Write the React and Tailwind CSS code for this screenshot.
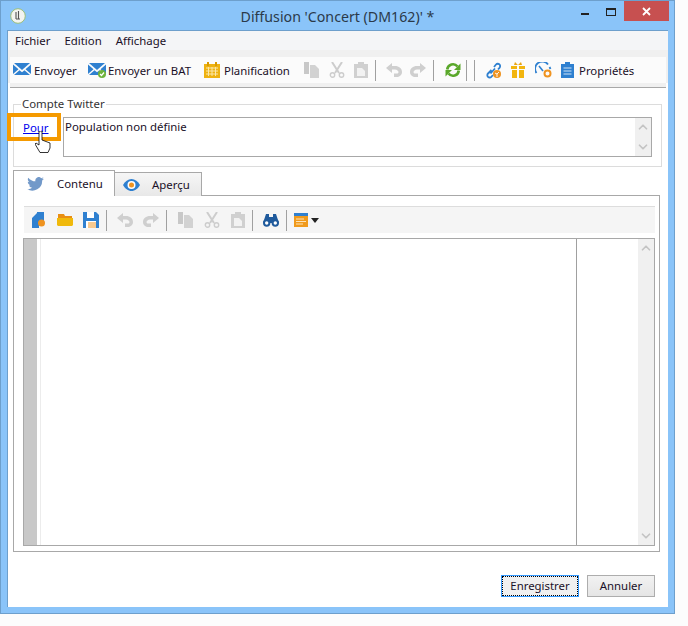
import { ChevronUp, ChevronDown } from "lucide-react";

// toolbar icons, all on a 16x16 grid
const Mail = ({ check }) => (
  <svg width="18" height="16" viewBox="0 0 18 16">
    <path d="M1 1h16l-8 7z" fill="#2f80d0" />
    <path d="M0 2.500l5.500 4.800L0 12zM18 2.500V12l-5.500-4.700zM1 13l5.500-4.700L9 10.300l2.500-2 5.500 4.700z" fill="#2f80d0" />
    {check && <circle cx="14" cy="12" r="4" fill="#6fb33a" />}
    {check && <path d="M12 12l1.500 1.500L16 10.500" stroke="#fff" strokeWidth="1.200" fill="none" />}
  </svg>
);

const Calendar = () => (
  <svg width="16" height="16" viewBox="0 0 16 16">
    <rect x="0" y="2" width="16" height="14" fill="#eeb211" />
    <rect x="3" y="0" width="2" height="4" fill="#d99a00" />
    <rect x="11" y="0" width="2" height="4" fill="#d99a00" />
    <path d="M2 6h12M2 9h12M2 12h12M4.500 5v9M8 5v9M11.500 5v9" stroke="#fbe7a8" strokeWidth="1" />
  </svg>
);

const Copy = () => (
  <svg width="16" height="16" viewBox="0 0 16 16">
    <path d="M0 0h5v12H0z" fill="#c8c8c8" />
    <path d="M6 3h5l4 4v9H6z" fill="#d2d2d2" />
  </svg>
);

const Cut = ({ color = "#cdcdcd" }) => (
  <svg width="16" height="16" viewBox="0 0 16 16" fill="none" stroke={color} strokeWidth="2">
    <path d="M3 0l7 11M13 0L6 11" />
    <circle cx="3.500" cy="13" r="2.200" strokeWidth="1.400" />
    <circle cx="12.500" cy="13" r="2.200" strokeWidth="1.400" />
  </svg>
);

const Paste = () => (
  <svg width="14" height="16" viewBox="0 0 14 16">
    <path d="M0 2h4V0h6v2h4v14H0z" fill="#d0d0d0" />
    <path d="M3 6h5l3 3v5H3z" fill="#f2f2f2" />
  </svg>
);

const Undo = ({ flip }) => (
  <svg width="16" height="14" viewBox="0 0 16 14" style={flip ? { transform: "scaleX(-1)" } : undefined}>
    <path d="M6 0v3h3c4 0 7 2.500 7 6s-3 5-5 5H8v-3.500h3c1 0 1.500-.7 1.500-1.500S11 6.500 9 6.500H6V10L0 5z" fill="#cfcfcf" />
  </svg>
);

const Refresh = () => (
  <svg width="16" height="16" viewBox="0 0 16 16" fill="none">
    <path d="M2.200 7.500A5.800 5.800 0 0 1 12.500 4.500" stroke="#5aa82a" strokeWidth="2.600" />
    <path d="M15.500 1.500v6.500H9z" fill="#5aa82a" />
    <path d="M13.800 8.500A5.800 5.800 0 0 1 3.500 11.500" stroke="#5aa82a" strokeWidth="2.600" />
    <path d="M.5 14.500V8H7z" fill="#5aa82a" />
  </svg>
);

const Link = () => (
  <svg width="17" height="17" viewBox="0 0 17 17" fill="none">
    <path d="M6.500 8L3 11.500a2.300 2.300 0 0 0 3.300 3.300L8 13M9 5l2-2.500a2.400 2.400 0 0 1 3.500 3.300L13 7.500M5.500 11.500L10 6.500" stroke="#2f80d0" strokeWidth="1.800" />
    <circle cx="12" cy="12" r="4" fill="#ef9320" />
    <path d="M10 11l2 1 2-2M12 12v3" stroke="#fff" strokeWidth="0.900" />
  </svg>
);

const Gift = () => (
  <svg width="14" height="16" viewBox="0 0 14 16">
    <path d="M4 0l3 3 3-3 1 3H3z" fill="#e9a512" />
    <path d="M0 4h6v3H0zM8 4h6v3H8zM1 8h5v8H1zM8 8h5v8H8z" fill="#f2b50f" />
  </svg>
);

const Gauge = () => (
  <svg width="17" height="16" viewBox="0 0 17 16" fill="none">
    <path d="M1.500 11A7 7 0 0 1 13 2.500" stroke="#2f80d0" strokeWidth="1.800" />
    <path d="M4 4l4 5" stroke="#2f80d0" strokeWidth="1.600" />
    <path d="M14.500 5l1 2" stroke="#2f80d0" strokeWidth="1.800" />
    <circle cx="12.500" cy="11.500" r="3" stroke="#ef9320" strokeWidth="2" />
  </svg>
);

const Clipboard = () => (
  <svg width="13" height="16" viewBox="0 0 13 16">
    <path d="M0 2h4V0h5v2h4v14H0z" fill="#2f80d0" />
    <path d="M2.500 6h8M2.500 9h8M2.500 12h8" stroke="#cfe3f6" strokeWidth="1" />
  </svg>
);

const Twitter = () => (
  <svg width="17" height="14" viewBox="0 0 24 20">
    <path d="M24 2.400c-.9.400-1.800.7-2.800.8 1-.6 1.800-1.600 2.200-2.700-1 .6-2 1-3.100 1.200A4.900 4.900 0 0 0 11.900 6.200C7.800 6 4.200 4 1.700.9c-1.300 2.200-.7 5.100 1.500 6.600-.8 0-1.600-.2-2.200-.6 0 2.300 1.600 4.400 3.900 4.900-.7.200-1.500.2-2.200.1.600 2 2.400 3.400 4.600 3.400A9.900 9.900 0 0 1 0 17.300 14 14 0 0 0 21.500 4.900c1-.7 1.800-1.500 2.500-2.500z" fill="#7299c9" />
  </svg>
);

const Eye = () => (
  <svg width="17" height="12" viewBox="0 0 17 12">
    <path d="M0 6c2-3.500 5-6 8.500-6S15 2.500 17 6c-2 3.500-5 6-8.500 6S2 9.500 0 6z" fill="#2f80d0" />
    <circle cx="8.500" cy="6" r="4" fill="#fff" />
    <circle cx="8.500" cy="6" r="2.500" fill="#ef9320" />
  </svg>
);

const NewFile = () => (
  <svg width="16" height="16" viewBox="0 0 16 16">
    <path d="M0 6l5-5V0h7v9H7v7H0z" fill="#2f80d0" />
    <circle cx="9.500" cy="11" r="3.500" fill="#ef9320" />
  </svg>
);

const Folder = () => (
  <svg width="16" height="12" viewBox="0 0 16 12">
    <path d="M1 0h6l1 2h7v2H1z" fill="#e98f12" />
    <path d="M0 4h16v7l-1 1H1l-1-1z" fill="#f0b90b" />
  </svg>
);

const Save = () => (
  <svg width="16" height="16" viewBox="0 0 16 16">
    <path d="M0 0h13l3 3v13H0z" fill="#2f80d0" />
    <rect x="4" y="0" width="7" height="6" fill="#fff" />
    <rect x="3" y="9" width="10" height="7" fill="#fff" />
    <path d="M5 11h8M5 13h8M5 15h8" stroke="#ef9320" strokeWidth="1" />
  </svg>
);

const Binoculars = () => (
  <svg width="16" height="14" viewBox="0 0 16 14" fill="none">
    <path d="M3 1h3v3h4V1h3l3 9H0z" fill="#1f5a9c" />
    <circle cx="3.700" cy="10" r="2.700" fill="#fff" stroke="#1f5a9c" strokeWidth="2" />
    <circle cx="12.300" cy="10" r="2.700" fill="#fff" stroke="#1f5a9c" strokeWidth="2" />
  </svg>
);

const Template = () => (
  <svg width="14" height="14" viewBox="0 0 14 14">
    <rect width="14" height="14" fill="#f09a1c" />
    <rect width="14" height="3" fill="#2f80d0" />
    <path d="M2 6h8M2 8.500h10M2 11h7" stroke="#fde3b8" strokeWidth="1" />
  </svg>
);

const AppLogo = () => (
  <svg width="16" height="16" viewBox="0 0 16 16" fill="none">
    <circle cx="8" cy="8" r="7.300" fill="#f4f4f0" stroke="#9cbf7a" />
    <path d="M6 4v7M8.500 3v8M6 11h4" stroke="#555" strokeWidth="1.100" />
  </svg>
);

const Sep = () => <span className="w-px h-[21px] bg-[#a0a0a0]" />;

function ToolItem({ icon, label, className }) {
  return (
    <span className={`flex items-center ${className || ""}`}>
      {icon}
      {label && <span className="text-[11.4px] leading-none text-[#1a1028] pt-px">{label}</span>}
    </span>
  );
}

function ScrollArrows({ className }) {
  return (
    <div className={`bg-[#f0f0f0] w-4 flex flex-col justify-between items-center py-[2px] ${className || ""}`}>
      <ChevronUp size={14} strokeWidth={3} color="#c4c4c4" />
      <ChevronDown size={14} strokeWidth={3} color="#c4c4c4" />
    </div>
  );
}

export default function App() {
  return (
    <div
      className="w-[688px] h-[626px] bg-[#fcfcfc] text-black"
      style={{ fontFamily: '"Noto Sans", "Open Sans", sans-serif' }}
    >
      <div className="w-[675px] h-[614px] bg-[#8ac4f9] border border-[#6d9fcc] flex flex-col">
        {/* title bar */}
        <div className="h-[29px] shrink-0 relative text-center text-[14.2px] leading-[31px] text-[#2b3a4a]">
          Diffusion 'Concert (DM162)' *
          <span className="absolute left-[9px] top-[7px] flex">
            <AppLogo />
          </span>
          <div className="absolute right-[5px] top-0 flex items-start">
            <span className="w-[8px] h-[2px] bg-[#222] mt-[12px] mr-[17px]" />
            <span className="w-[10px] h-[8px] border border-t-2 border-[#222] mt-[7px] mr-[8px]" />
            <span className="w-[45px] h-[20px] bg-[#c75050] flex items-center justify-center">
              <svg width="9" height="9" viewBox="0 0 9 9">
                <path d="M1 1l7 7M8 1L1 8" stroke="#fff" strokeWidth="1.800" />
              </svg>
            </span>
          </div>
        </div>

        {/* client area */}
        <div className="flex-1 mx-[6px] mb-[6px] bg-white border-l border-t border-[#6d9fcc] flex flex-col min-h-0">
          <div className="h-[19px] bg-[#f4f5f7] flex items-center gap-[14px] pl-[7px] pt-px text-[11.4px] leading-none text-[#1a1028]">
            <span>Fichier</span>
            <span>Edition</span>
            <span>Affichage</span>
          </div>
          <div className="bg-[#f0f0f0] pt-[7px]">
            <div className="h-[26px] mx-[2px] bg-[#fbfbfb] flex items-center pl-[3px]">
              <ToolItem icon={<Mail />} label="Envoyer" className="w-[75px] gap-[3px]" />
              <ToolItem icon={<Mail check />} label="Envoyer un BAT" className="w-[116px] gap-[2px]" />
              <ToolItem icon={<Calendar />} label="Planification" className="w-[100px] gap-[4px]" />
              <span className="w-[25px] flex"><Copy /></span>
              <span className="w-[25px] flex"><Cut /></span>
              <span className="w-[21px] flex"><Paste /></span>
              <Sep />
              <span className="ml-[10px] w-[24px] flex"><Undo /></span>
              <span className="w-[23px] flex"><Undo flip /></span>
              <Sep />
              <span className="ml-[11px] w-[21px] flex"><Refresh /></span>
              <Sep />
              <span className="w-[7px]" />
              <Sep />
              <span className="ml-[10px] w-[26px] flex"><Link /></span>
              <span className="w-[24px] flex"><Gift /></span>
              <span className="w-[26px] flex"><Gauge /></span>
              <ToolItem icon={<Clipboard />} label="Propriétés" className="gap-[5px]" />
            </div>
          </div>
          <div className="h-[4px] bg-[#f0f0f0] mx-[2px] border-b border-[#a8a8a8] box-content" />

          <div className="flex-1 flex flex-col pl-[5px] pr-[6px] min-h-0">
            {/* Compte Twitter group */}
            <fieldset className="mt-[9px] h-[70px] border border-[#dcdcdc] relative">
              <legend className="ml-[7px] px-[1px] text-[11.4px] leading-[14px] text-[#333]">Compte Twitter</legend>
              <div className="mt-[6px] ml-[49px] mr-[9px] h-[40px] border border-[#a8a8a8] flex">
                <div className="flex-1 pl-[1px] text-[11.4px] leading-[17px] text-[#1a1028]">Population non définie</div>
                <ScrollArrows />
              </div>
              <a className="absolute left-[9px] top-[8px] text-[11.4px] leading-[17px] text-[#0000ee] underline">Pour</a>
              <span className="absolute left-[-7px] top-[2px] w-[54px] h-[28px] border-4 border-[#f59a00]" />
              <svg className="absolute left-[21px] top-[20px]" width="18" height="22" viewBox="0 0 18 22">
                <path d="M4 0h3v9l8 3v5l-2 4.500H5L0 13l1-1 3 2z" fill="#fff" stroke="#000" strokeWidth="0.800" />
              </svg>
            </fieldset>

            {/* tabs */}
            <div className="flex items-end mt-[3px] h-[26px] relative z-10">
              <div className="w-[102px] h-[26px] bg-white border border-b-0 border-[#a8a8a8] flex items-center pl-[13px] gap-[13px] text-[11.4px] text-[#1a1028]">
                <Twitter />
                Contenu
              </div>
              <div className="w-[87px] h-[24px] bg-gradient-to-b from-[#f6f6f6] to-[#e8e8e8] border border-l-0 border-b-0 border-[#a8a8a8] flex items-center pl-[8px] gap-[12px] text-[11.4px] text-[#1a1028]">
                <Eye />
                Aperçu
              </div>
            </div>

            <div className="h-[357px] mr-[2px] border border-[#a8a8a8] pt-[10px] px-[4px] flex flex-col -mt-px">
              <div className="h-[27px] ml-[6px] border-t border-[#dddddd] bg-[#f5f5f5] flex items-center pl-[8px]">
                <span className="w-[25px] flex"><NewFile /></span>
                <span className="w-[26px] flex"><Folder /></span>
                <span className="w-[23px] flex"><Save /></span>
                <Sep />
                <span className="ml-[10px] w-[26px] flex"><Undo /></span>
                <span className="w-[23px] flex"><Undo flip /></span>
                <Sep />
                <span className="ml-[11px] w-[26px] flex"><Copy /></span>
                <span className="w-[27px] flex"><Cut /></span>
                <span className="w-[21px] flex"><Paste /></span>
                <Sep />
                <span className="ml-[10px] w-[23px] flex"><Binoculars /></span>
                <Sep />
                <span className="ml-[7px] w-[17px] flex"><Template /></span>
                <span className="w-0 h-0 border-x-4 border-x-transparent border-t-[5px] border-t-[#222]" />
              </div>
              <div className="flex-1 mt-[5px] ml-[5px] mb-[5px] border border-[#a8a8a8] flex min-h-0">
                <div className="w-[13px] bg-[#c8c8c8]" />
                <div className="w-[4px] bg-white border-r border-[#ececec]" />
                <div className="flex-1" />
                <div className="w-[78px] border-l border-[#a0a0a0] flex justify-end">
                  <ScrollArrows />
                </div>
              </div>
            </div>

            {/* bottom buttons */}
            <div className="flex justify-end gap-[8px] mt-[23px] pr-[7px]">
              <button className="w-[78px] h-[22px] border border-[#3399ff] bg-[#f0f0f0] outline-1 outline-dotted -outline-offset-2 outline-black text-[11.4px] leading-none text-[#1a1028]">
                Enregistrer
              </button>
              <button className="w-[68px] h-[22px] border border-[#adadad] bg-gradient-to-b from-[#f2f2f2] to-[#e5e5e5] text-[11.4px] leading-none text-[#1a1028]">
                Annuler
              </button>
            </div>
          </div>
        </div>
      </div>
    </div>
  );
}
